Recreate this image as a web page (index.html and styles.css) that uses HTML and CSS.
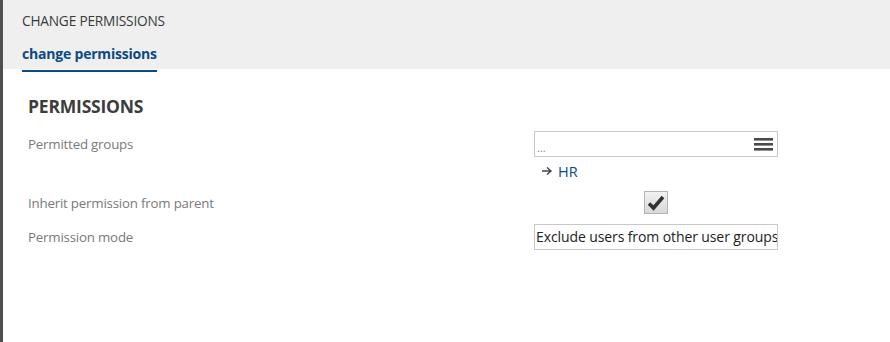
FILE: index.html
```html
<!DOCTYPE html>
<html lang="en">

<head>
    <meta charset="UTF-8">
    <title>Change permissions</title>
    <link rel="stylesheet" href="styles.css">
</head>

<body>
    <div class="frame">
        <div class="header">
            <div class="page-title">CHANGE PERMISSIONS</div>
            <div class="tabs">
                <span class="tab active">change permissions</span>
            </div>
        </div>

        <div class="main-content">
            <h2>PERMISSIONS</h2>
            <div class="form-grid">
                <div class="label">Permitted groups</div>
                <div class="value">
                    <div class="picker">
                        <span class="picker-text">...</span>
                        <svg class="menu-icon" width="19" height="15" viewBox="0 0 19 15">
                            <rect x="0" y="1" width="19" height="2.6" fill="#4a4a4a"/>
                            <rect x="0" y="6" width="19" height="2.6" fill="#4a4a4a"/>
                            <rect x="0" y="11" width="19" height="2.6" fill="#4a4a4a"/>
                        </svg>
                    </div>
                    <div class="group-item">
                        <svg width="12" height="10" viewBox="0 0 12 10">
                            <path d="M1 5 H10 M6 1.5 L10 5 L6 8.5" stroke="#444" stroke-width="1.4" fill="none"/>
                        </svg>
                        <span class="group-link">HR</span>
                    </div>
                </div>

                <div class="label">Inherit permission from parent</div>
                <div class="value center tall">
                    <span class="checkbox">
                        <svg width="18" height="16" viewBox="0 0 18 16">
                            <path d="M2 8.5 L6.5 13 L16 2" stroke="#333" stroke-width="3.6" fill="none"/>
                        </svg>
                    </span>
                </div>

                <div class="label">Permission mode</div>
                <div class="value">
                    <div class="select">Exclude users from other user groups</div>
                </div>
            </div>
        </div>
    </div>
</body>

</html>
```

FILE: styles.css
```css
html,
body {
    margin: 0;
    padding: 0;
    height: 100%;
    background: #ffffff;
}

body {
    font-family: "Open Sans", "Noto Sans", sans-serif;
    border-left: 3px solid #4f4f4f;
    box-sizing: border-box;
}

.frame {
    height: 100%;
}

.header {
    background-color: #efefef;
    height: 69px;
    padding-left: 19px;
    box-sizing: border-box;
}

.page-title {
    font-size: 13.7px;
    color: #3a3a3a;
    padding-top: 13px;
    line-height: 16px;
    letter-spacing: -0.2px;
}

.tabs {
    margin-top: 13px;
}

.tab {
    display: inline-block;
    font-size: 14px;
    font-weight: bold;
    color: #0b4a82;
    line-height: 18px;
    padding-bottom: 7px;
    letter-spacing: -0.2px;
}

.tab.active {
    border-bottom: 2px solid #0b4a82;
}

.main-content {
    padding: 25px 0 0 25px;
}

h2 {
    margin: 0 0 13px 0;
    font-size: 17.5px;
    font-weight: bold;
    color: #3c3c3c;
    line-height: 24px;
    letter-spacing: -0.2px;
}

.form-grid {
    display: grid;
    grid-template-columns: 506px 244px;
    row-gap: 5px;
}

.label {
    font-size: 13.3px;
    color: #7a7a7a;
    line-height: 26px;
    letter-spacing: -0.2px;
}

.value.center {
    display: flex;
    justify-content: center;
    align-items: flex-start;
}

.value.tall {
    padding-bottom: 5px;
}

.picker {
    height: 26px;
    border: 1px solid #c8c8c8;
    box-sizing: border-box;
    display: flex;
    align-items: center;
    justify-content: space-between;
    padding: 0 4px 0 2px;
}

.picker-text {
    font-size: 11px;
    color: #888;
    margin-top: 6px;
}

.group-item {
    display: flex;
    align-items: center;
    gap: 5px;
    padding-left: 7px;
    height: 28px;
}

.group-link {
    color: #0b4a82;
    font-size: 14.5px;
}

.checkbox {
    width: 24px;
    height: 23px;
    border: 1px solid #b5b5b5;
    background: linear-gradient(#f2f2f2, #d8d8d8);
    box-sizing: border-box;
    display: flex;
    align-items: center;
    justify-content: center;
    margin-top: 1px;
}

.select {
    height: 26px;
    border: 1px solid #c8c8c8;
    box-sizing: border-box;
    font-size: 14px;
    color: #222;
    line-height: 24px;
    padding-left: 1px;
    white-space: nowrap;
    overflow: hidden;
    letter-spacing: -0.1px;
}
```
